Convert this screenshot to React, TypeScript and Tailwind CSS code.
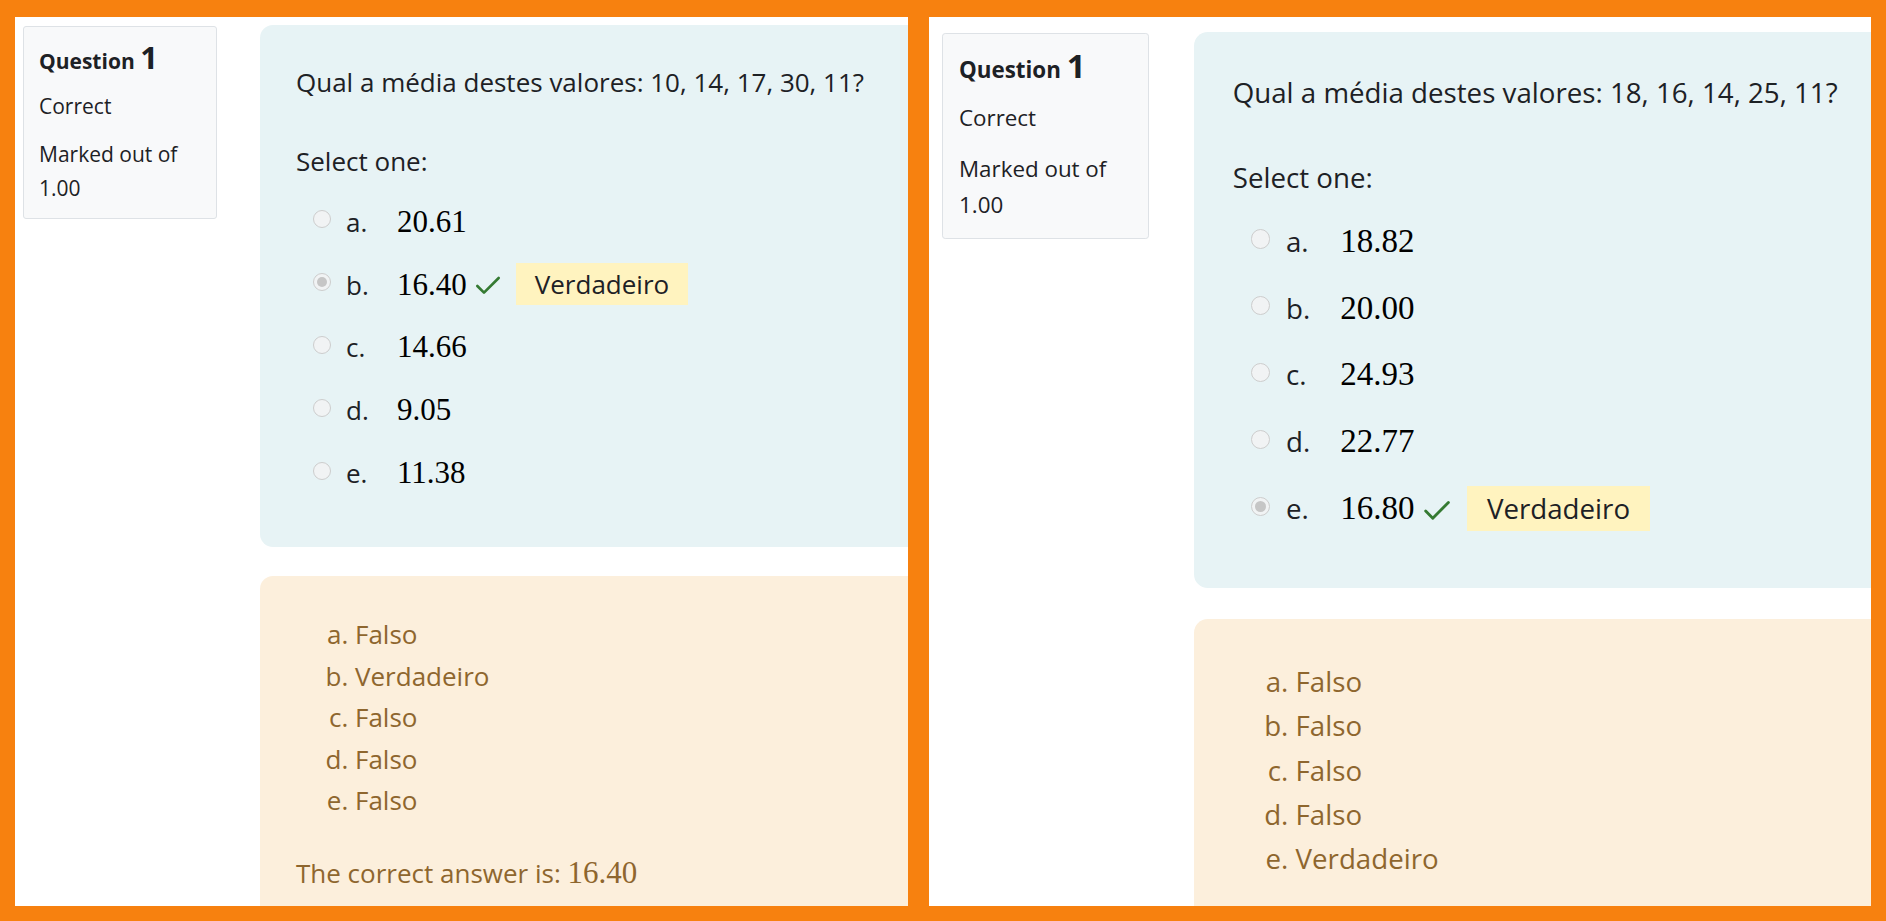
import { Check } from "lucide-react";

type Option = {
  letter: string;
  value: string;
  checked?: boolean;
};

type Attempt = {
  values: string;
  options: Option[];
  feedback: string[];
  correct?: string;
  frame: string;
  zoom: string;
};

const attempts: Attempt[] = [
  {
    values: "10, 14, 17, 30, 11",
    options: [
      { letter: "a.", value: "20.61" },
      { letter: "b.", value: "16.40", checked: true },
      { letter: "c.", value: "14.66" },
      { letter: "d.", value: "9.05" },
      { letter: "e.", value: "11.38" },
    ],
    feedback: ["Falso", "Verdadeiro", "Falso", "Falso", "Falso"],
    correct: "16.40",
    frame: "w-[893px] pl-[8px] pt-[8px]",
    zoom: "",
  },
  {
    // second screenshot was taken at a slightly bigger zoom, answer line is cut off below
    values: "18, 16, 14, 25, 11",
    options: [
      { letter: "a.", value: "18.82" },
      { letter: "b.", value: "20.00" },
      { letter: "c.", value: "24.93" },
      { letter: "d.", value: "22.77" },
      { letter: "e.", value: "16.80", checked: true },
    ],
    feedback: ["Falso", "Falso", "Falso", "Falso", "Verdadeiro"],
    frame: "w-[942px] pl-[13px] pt-[15px]",
    zoom: "[zoom:1.065]",
  },
];

const Radio = ({ checked }: { checked?: boolean }) => (
  <span className="-mt-[4px] flex h-[18px] w-[18px] shrink-0 items-center justify-center rounded-full border border-[#cdcdcd] bg-[#f1f3f4]">
    {checked && <span className="h-[10px] w-[10px] rounded-full bg-[#c6c6c6]" />}
  </span>
);

const InfoBox = () => (
  <div className="mt-[1px] h-[193px] w-[194px] shrink-0 rounded-[3px] border border-[#dee2e6] bg-[#f8f9fa] px-[15px] pt-[13px] text-[21px] leading-[34px]">
    <h3 className="font-bold">
      Question <span className="text-[31px]">1</span>
    </h3>
    <div className="mt-[11px]">Correct</div>
    <div className="mt-[14px]">Marked out of 1.00</div>
  </div>
);

const Panel = ({ attempt }: { attempt: Attempt }) => (
  <section className={`shrink-0 overflow-hidden bg-white ${attempt.frame}`}>
    <div className={`flex items-start ${attempt.zoom}`}>
      <InfoBox />

      <div className="ml-[43px] w-[720px] shrink-0">
        <div className="h-[522px] rounded-[13px] bg-[#e7f3f5] pl-[36px] pt-[38px]">
          <p className="text-[26px] leading-[39px]">
            Qual a média destes valores: {attempt.values}?
          </p>
          <p className="mt-[40px] text-[26px] leading-[39px]">Select one:</p>
          <div className="mt-[9px] ml-[17px]">
            {attempt.options.map((opt) => (
              <div key={opt.letter} className="flex h-[62.8px] items-center">
                <Radio checked={opt.checked} />
                <div className="flex items-baseline">
                  <span className="ml-[15px] w-[51px] shrink-0 text-[26px] leading-none">
                    {opt.letter}
                  </span>
                  <span className="font-['Liberation_Serif',serif] text-[31px] leading-none text-black">
                    {opt.value}
                  </span>
                </div>
                {opt.checked && (
                  <>
                    <Check
                      size={32}
                      strokeWidth={2}
                      className="mt-[4px] ml-[5px] shrink-0 text-[#357a32]"
                    />
                    <span className="ml-[12px] flex h-[42px] items-center bg-[#fff3bf] px-[19px] text-[26px]">
                      Verdadeiro
                    </span>
                  </>
                )}
              </div>
            ))}
          </div>
        </div>

        <div className="mt-[29px] h-[640px] rounded-[13px] bg-[#fcefdc] pl-[36px] pt-[38px] text-[#8e662e]">
          <ol className="list-[lower-alpha] pl-[59px] text-[26px] leading-[41.5px]">
            {attempt.feedback.map((f, i) => (
              <li key={i}>{f}</li>
            ))}
          </ol>
          {attempt.correct && (
            <p className="mt-[31px] text-[26px] leading-[39px]">
              The correct answer is:{" "}
              <span className="font-['Liberation_Serif',serif] text-[31px]">
                {attempt.correct}
              </span>
            </p>
          )}
        </div>
      </div>
    </div>
  </section>
);

export default function App() {
  return (
    <div className="flex h-screen w-full gap-[21px] bg-[#f7810f] px-[15px] pt-[17px] pb-[15px] font-['Open_Sans',sans-serif] text-[#1d2125]">
      {attempts.map((a) => (
        <Panel key={a.values} attempt={a} />
      ))}
    </div>
  );
}
